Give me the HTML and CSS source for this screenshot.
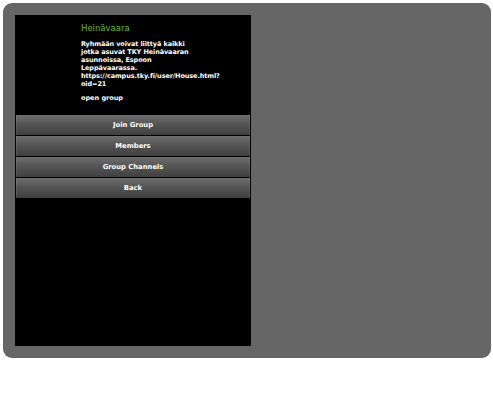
FILE: index.html
```html
<!DOCTYPE html>
<html>
<head>
<meta charset="utf-8">
<link rel="stylesheet" href="styles.css">
</head>
<body>
<div class="frame">
  <div class="screen">
    <div class="info">
      <div class="title">Heinävaara</div>
      <p class="desc">Ryhmään voivat liittyä kaikki<br>jotka asuvat TKY Heinävaaran<br>asunnoissa, Espoon<br>Leppävaarassa.<br>https://campus.tky.fi/user/House.html?<br>oid=21</p>
      <p class="type">open group</p>
    </div>
    <div class="buttons">
      <div class="btn">Join Group</div>
      <div class="btn">Members</div>
      <div class="btn">Group Channels</div>
      <div class="btn">Back</div>
    </div>
  </div>
</div>
</body>
</html>
```
FILE: styles.css
```css
html, body {
  margin: 0;
  padding: 0;
  background: #fff;
}
body {
  padding: 3px;
  font-family: "DejaVu Sans", Verdana, sans-serif;
}
.frame {
  box-sizing: border-box;
  width: 488px;
  height: 355px;
  padding: 12px;
  background: #666666;
  border-radius: 9px;
}
.screen {
  width: 236px;
  height: 331px;
  background: #000;
  display: flex;
  flex-direction: column;
}
.info {
  padding: 7px 0 0 66px;
  height: 93px;
  box-sizing: border-box;
  color: #fff;
}
.title {
  color: #66bb3a;
  font-size: 8.5px;
  line-height: 12px;
}
.desc {
  margin: 6px 0 0;
  font-size: 6.5px;
  font-weight: bold;
  line-height: 8px;
  letter-spacing: -0.1px;
  white-space: nowrap;
}
.type {
  margin: 6px 0 0;
  font-size: 6.5px;
  font-weight: bold;
  line-height: 8px;
}
.buttons {
  margin: 7px 1px 0;
  display: flex;
  flex-direction: column;
  gap: 1px;
}
.btn {
  height: 20px;
  line-height: 21px;
  text-align: center;
  color: #fff;
  font-size: 6.8px;
  font-weight: bold;
  background: linear-gradient(to bottom, #6e6e6e 0%, #555 45%, #404040 100%);
  box-shadow: inset 1px 0 0 rgba(255,255,255,0.08), inset -1px 0 0 rgba(255,255,255,0.08);
}
```
